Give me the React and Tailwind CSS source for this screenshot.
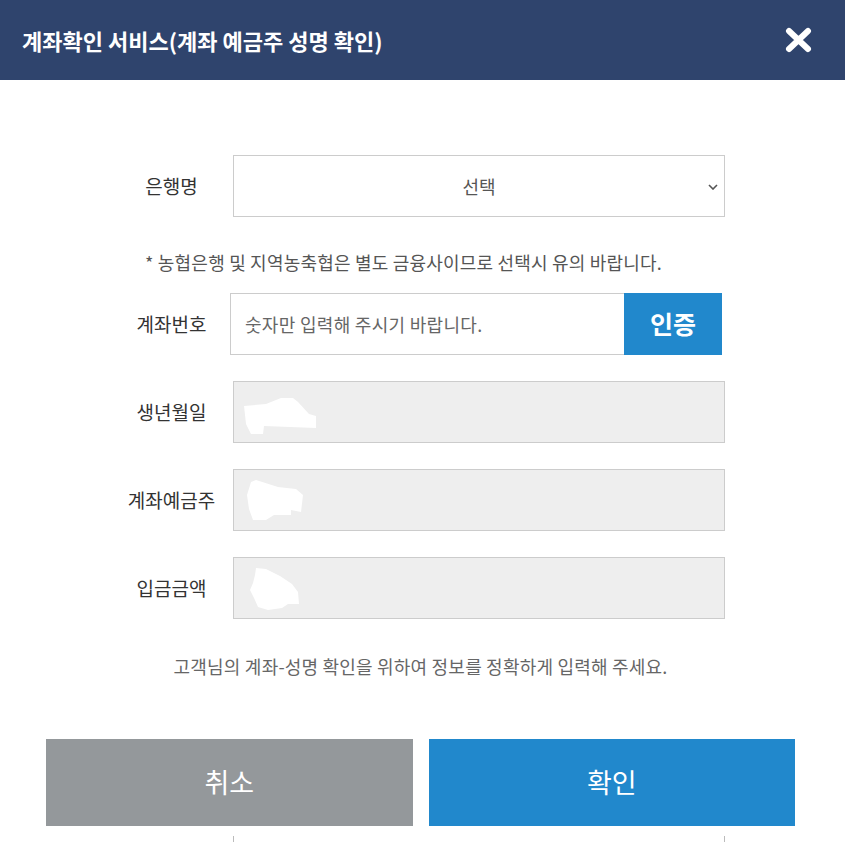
import React from 'react';

const font = { fontFamily: '"Noto Sans CJK KR", "Noto Sans", sans-serif' };

// white masking blobs over the filled-in values
function Blob({ points }) {
    return (
        <svg className="absolute left-0 top-0" width="100" height="62" viewBox="0 0 100 62">
            <polygon points={points} fill="#ffffff" />
        </svg>
    );
}

function Row({ label, children }) {
    return (
        <div className="flex items-center">
            <div className="w-[123px] text-center text-[19px] text-[#333]">{label}</div>
            {children}
        </div>
    );
}

function ReadBox({ blob }) {
    return (
        <div className="relative w-[492px] h-[62px] bg-[#eeeeee] border border-[#cccccc]">
            <Blob points={blob} />
        </div>
    );
}

export default function App() {
    return (
        <div className="w-[845px] min-h-[842px] bg-white" style={font}>
            <div className="h-20 bg-[#2f446d] flex items-center justify-between pl-[22px] pr-[33px]">
                <h1 className="text-white text-[22px] font-bold">계좌확인 서비스(계좌 예금주 성명 확인)</h1>
                <svg width="27" height="26" viewBox="0 0 27 26">
                    <path d="M4 4 L23 22 M23 4 L4 22" stroke="#ffffff" strokeWidth="6" strokeLinecap="round" />
                </svg>
            </div>

            <div className="ml-[110px] w-[615px] pt-[75px]">
                <Row label="은행명">
                    <div className="relative w-[492px] h-[62px] border border-[#cccccc] flex items-center justify-center text-[18px] text-[#555]">
                        선택
                        <svg className="absolute right-[6px] top-[28px]" width="10" height="6" viewBox="0 0 10 6">
                            <path d="M1 1 L5 5 L9 1" stroke="#555" strokeWidth="1.6" fill="none" />
                        </svg>
                    </div>
                </Row>

                <p className="mt-[34px] mb-5 h-[22px] leading-[22px] text-center text-[18px] text-[#555] tracking-[0.2px] ml-[-38px] mr-[-10px]">
                    * 농협은행 및 지역농축협은 별도 금융사이므로 선택시 유의 바랍니다.
                </p>

                <div className="flex flex-col gap-[26px]">
                    <Row label="계좌번호">
                        <div className="flex ml-[-3px] h-[62px]">
                            <input
                                className="w-[394px] h-full border border-[#cccccc] border-r-0 px-[14px] text-[18px] tracking-[0.3px] text-[#555] placeholder-[#666] outline-none"
                                placeholder="숫자만 입력해 주시기 바랍니다."
                            />
                            <button className="w-[98px] h-full bg-[#2188cc] text-white text-[25px] font-bold">인증</button>
                        </div>
                    </Row>
                    <Row label="생년월일">
                        <ReadBox blob="10,24 32,22 47,16 59,16 64,20 75,32 82,34 82,46 30,44 29,52 17,52 12,42" />
                    </Row>
                    <Row label="계좌예금주">
                        <ReadBox blob="17,12 22,10 44,17 62,19 69,25 67,42 57,40 57,45 40,45 32,50 19,50 15,39 13,25" />
                    </Row>
                    <Row label="입금금액">
                        <ReadBox blob="22,10 32,11 46,18 58,26 64,34 65,46 54,46 48,50 34,52 24,49 20,40 16,32 19,25 21,17" />
                    </Row>
                </div>
            </div>

            <p className="mt-9 h-[22px] leading-[22px] text-center text-[18px] text-[#666] tracking-[0.2px] pr-[4px]">
                고객님의 계좌-성명 확인을 위하여 정보를 정확하게 입력해 주세요.
            </p>

            <div className="mt-[62px] ml-[46px] w-[749px] flex gap-4">
                <button className="flex-1 h-[87px] bg-[#94989b] text-white text-[27px]">취소</button>
                <button className="flex-1 h-[87px] bg-[#2188cc] text-white text-[27px]">확인</button>
            </div>

            <div className="mt-[10px] ml-[233px] w-[492px] h-[10px] border-x border-[#bbbbbb]" />
        </div>
    );
}
